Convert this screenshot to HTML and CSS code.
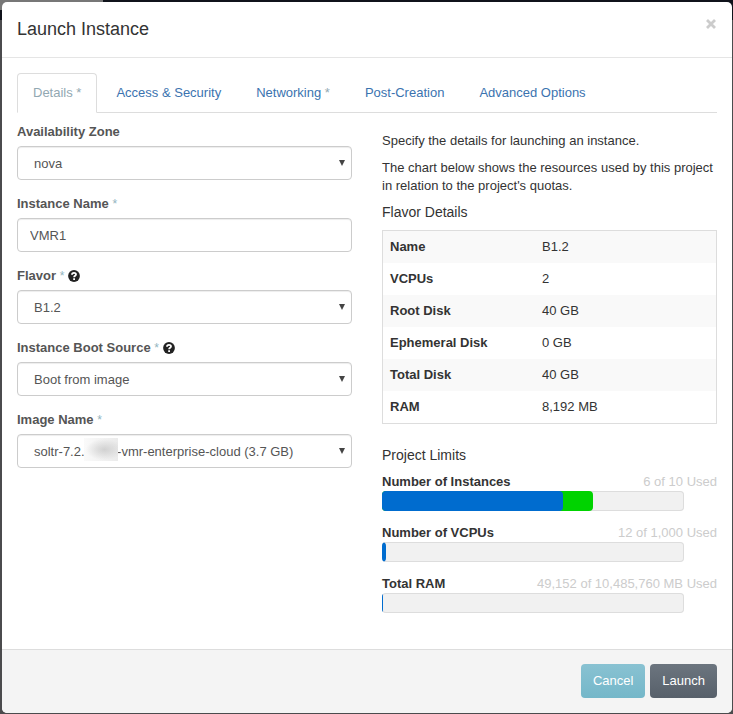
FILE: index.html
```html
<!DOCTYPE html>
<html lang="en">
<head>
<meta charset="utf-8">
<meta name="viewport" content="width=device-width, initial-scale=1">
<title>Launch Instance</title>
<link rel="stylesheet" href="styles.css">
</head>
<body>
<form class="modal" role="dialog" aria-labelledby="modal-title">
  <header class="modal-header">
    <h1 id="modal-title" class="modal-title">Launch Instance</h1>
    <button type="button" class="close" aria-label="Close">
      <svg viewBox="0 0 10 10" width="10" height="10" aria-hidden="true"><path d="M1 1l8 8M9 1l-8 8" stroke="currentColor" stroke-width="2.8"/></svg>
    </button>
  </header>
  <main class="modal-body">
    <nav>
      <ul class="tabs">
        <li><a class="tab active" href="#details">Details <span class="req">*</span></a></li>
        <li><a class="tab" href="#access">Access &amp; Security</a></li>
        <li><a class="tab" href="#networking">Networking <span class="req">*</span></a></li>
        <li><a class="tab" href="#post">Post-Creation</a></li>
        <li><a class="tab" href="#advanced">Advanced Options</a></li>
      </ul>
    </nav>
    <div class="columns" id="details">
      <section class="fields">
        <div class="field">
          <label for="zone">Availability Zone</label>
          <div class="select-box">
            <select id="zone" class="control"><option>nova</option></select>
            <svg class="arrow" viewBox="0 0 6 6" aria-hidden="true"><path d="M0 0h6L3 6z"/></svg>
          </div>
        </div>
        <div class="field">
          <label for="name">Instance Name <span class="star">*</span></label>
          <input id="name" class="control" type="text" value="VMR1">
        </div>
        <div class="field">
          <label for="flavor">Flavor <span class="star">*</span>
            <svg class="help" viewBox="0 0 12 12" aria-hidden="true"><circle cx="6" cy="6" r="5.9"/><path d="M4 4.7C4 2.4 8 2.4 8 4.5 8 5.8 6.1 5.8 6.1 7.2"/><path d="M6.1 8.2v1.7"/></svg>
          </label>
          <div class="select-box">
            <select id="flavor" class="control"><option>B1.2</option></select>
            <svg class="arrow" viewBox="0 0 6 6" aria-hidden="true"><path d="M0 0h6L3 6z"/></svg>
          </div>
        </div>
        <div class="field">
          <label for="source">Instance Boot Source <span class="star">*</span>
            <svg class="help" viewBox="0 0 12 12" aria-hidden="true"><circle cx="6" cy="6" r="5.9"/><path d="M4 4.7C4 2.4 8 2.4 8 4.5 8 5.8 6.1 5.8 6.1 7.2"/><path d="M6.1 8.2v1.7"/></svg>
          </label>
          <div class="select-box">
            <select id="source" class="control"><option>Boot from image</option></select>
            <svg class="arrow" viewBox="0 0 6 6" aria-hidden="true"><path d="M0 0h6L3 6z"/></svg>
          </div>
        </div>
        <div class="field">
          <label for="image">Image Name <span class="star">*</span></label>
          <div class="select-box">
            <select id="image" class="control"><option>soltr-7.2.&nbsp;&nbsp;&nbsp;&nbsp;&nbsp;&nbsp;&nbsp;&nbsp;&nbsp;-vmr-enterprise-cloud (3.7 GB)</option></select>
            <span class="smudge"></span>
            <svg class="arrow" viewBox="0 0 6 6" aria-hidden="true"><path d="M0 0h6L3 6z"/></svg>
          </div>
        </div>
      </section>
      <section class="info">
        <p>Specify the details for launching an instance.</p>
        <p>The chart below shows the resources used by this project in relation to the project's quotas.</p>
        <h2>Flavor Details</h2>
        <table class="flavor">
          <tbody>
            <tr><th scope="row">Name</th><td>B1.2</td></tr>
            <tr><th scope="row">VCPUs</th><td>2</td></tr>
            <tr><th scope="row">Root Disk</th><td>40 GB</td></tr>
            <tr><th scope="row">Ephemeral Disk</th><td>0 GB</td></tr>
            <tr><th scope="row">Total Disk</th><td>40 GB</td></tr>
            <tr><th scope="row">RAM</th><td>8,192 MB</td></tr>
          </tbody>
        </table>
        <h2>Project Limits</h2>
        <div class="quota">
          <div class="quota-head"><strong>Number of Instances</strong><span>6 of 10 Used</span></div>
          <div class="bar"><div class="added" style="width:70%"></div><div class="used" style="width:60%"></div></div>
        </div>
        <div class="quota">
          <div class="quota-head"><strong>Number of VCPUs</strong><span>12 of 1,000 Used</span></div>
          <div class="bar"><div class="used" style="width:1.2%"></div></div>
        </div>
        <div class="quota">
          <div class="quota-head"><strong>Total RAM</strong><span>49,152 of 10,485,760 MB Used</span></div>
          <div class="bar"><div class="used" style="width:0.47%"></div></div>
        </div>
      </section>
    </div>
  </main>
  <footer class="modal-footer">
    <button type="button" class="btn cancel">Cancel</button>
    <button type="submit" class="btn launch">Launch</button>
  </footer>
</form>
</body>
</html>
```
FILE: styles.css
```css
* { box-sizing: border-box; }

body {
  margin: 0;
  padding: 2px 1px 1px 2px;
  min-height: 100vh;
  display: flex;
  background:
    linear-gradient(#777, #777) 0 0 / 103px 10px no-repeat,
    linear-gradient(#10131b, #10131b) 0 0 / 100% 20px no-repeat,
    #4b4b4d;
  color: #333;
  font: 13px/18px "Liberation Sans", Arial, sans-serif;
}

.modal {
  flex: 1;
  min-width: 0;
  display: flex;
  flex-direction: column;
  background: #fff;
  border-radius: 5px;
  overflow: hidden;
}

.modal-header {
  display: flex;
  justify-content: space-between;
  align-items: flex-start;
  padding: 15px;
  border-bottom: 1px solid #e5e5e5;
}

.modal-title {
  margin: 0;
  font-size: 18px;
  line-height: 25px;
  font-weight: 400;
}

.close {
  display: flex;
  padding: 2px 1px;
  border: 0;
  background: none;
  color: #ccc;
}

.modal-body {
  flex: 1;
  padding: 15px;
}

.tabs {
  display: flex;
  gap: 3px;
  margin: 0;
  padding: 0;
  list-style: none;
  border-bottom: 1px solid #ddd;
}

.tabs li { margin-bottom: -1px; }

.tab {
  display: block;
  padding: 10px 15px;
  border: 1px solid transparent;
  border-radius: 4px 4px 0 0;
  color: #3b73af;
  text-decoration: none;
}

.tab.active {
  border-color: #ddd #ddd #fff;
  background: #fff;
  color: #92a8b2;
}

.req { color: #92a8b2; }

.columns {
  display: grid;
  grid-template-columns: 1fr 1fr;
  gap: 30px;
  padding-top: 10px;
}

.field { margin-bottom: 15px; }

label {
  display: block;
  margin-bottom: 5px;
  color: #555;
  font-weight: 700;
}

.star {
  color: #92b4c0;
  font-size: 12px;
  font-weight: 400;
}

.help {
  width: 12px;
  height: 12px;
  vertical-align: -2px;
  fill: #222;
}

.help path {
  fill: none;
  stroke: #fff;
  stroke-width: 1.8;
}

.control {
  display: block;
  width: 100%;
  height: 34px;
  padding: 6px 12px;
  border: 1px solid #ccc;
  border-radius: 4px;
  background: #fff;
  box-shadow: inset 0 1px 1px rgba(0, 0, 0, .075);
  color: #555;
  font: inherit;
}

select.control {
  appearance: none;
  padding: 7px 16px 5px;
}

.select-box { position: relative; }

.arrow {
  position: absolute;
  top: 14px;
  right: 7px;
  width: 6px;
  height: 6px;
  fill: #444;
  pointer-events: none;
}

.smudge {
  position: absolute;
  top: 4px;
  left: 67px;
  width: 34px;
  height: 23px;
  background:
    radial-gradient(ellipse at 60% 50%, rgba(195, 195, 195, .7), transparent 65%),
    linear-gradient(90deg, #fafafa, #ebebeb);
  pointer-events: none;
}

.info { padding-top: 9px; }

.info p { margin: 0 0 9px; }

h2 {
  margin: 0 0 9px;
  font-size: 14px;
  line-height: 17px;
  font-weight: 400;
}

.flavor {
  width: 100%;
  margin-bottom: 23px;
  border: 1px solid #ddd;
  border-spacing: 0;
  table-layout: fixed;
}

.flavor th,
.flavor td {
  padding: 7px;
  text-align: left;
}

.flavor th { width: 152px; }

.flavor tr:nth-child(odd) { background: #f9f9f9; }

.quota { margin-bottom: 13px; }

.quota-head {
  display: flex;
  justify-content: space-between;
}

.quota-head span { color: #ccc; }

.bar {
  display: grid;
  width: 90%;
  height: 20px;
  border-radius: 4px;
  background: #f1f1f1;
  box-shadow: inset 0 0 0 1px #ddd;
  overflow: hidden;
}

.bar div {
  grid-area: 1 / 1;
  border-radius: 0 4px 4px 0;
}

.bar .used { background: #006ccf; }

.bar .added { background: #00d300; }

.modal-footer {
  display: flex;
  justify-content: flex-end;
  gap: 5px;
  padding: 14px 15px 15px;
  border-top: 1px solid #ddd;
  background: #f4f4f4;
}

.btn {
  height: 34px;
  padding: 6px 12px;
  border: 0;
  border-radius: 4px;
  color: #fff;
  font: inherit;
}

.cancel { background: linear-gradient(#89c2d2, #74b7c9); }

.launch { background: linear-gradient(#6c757f, #57606a); }
```
